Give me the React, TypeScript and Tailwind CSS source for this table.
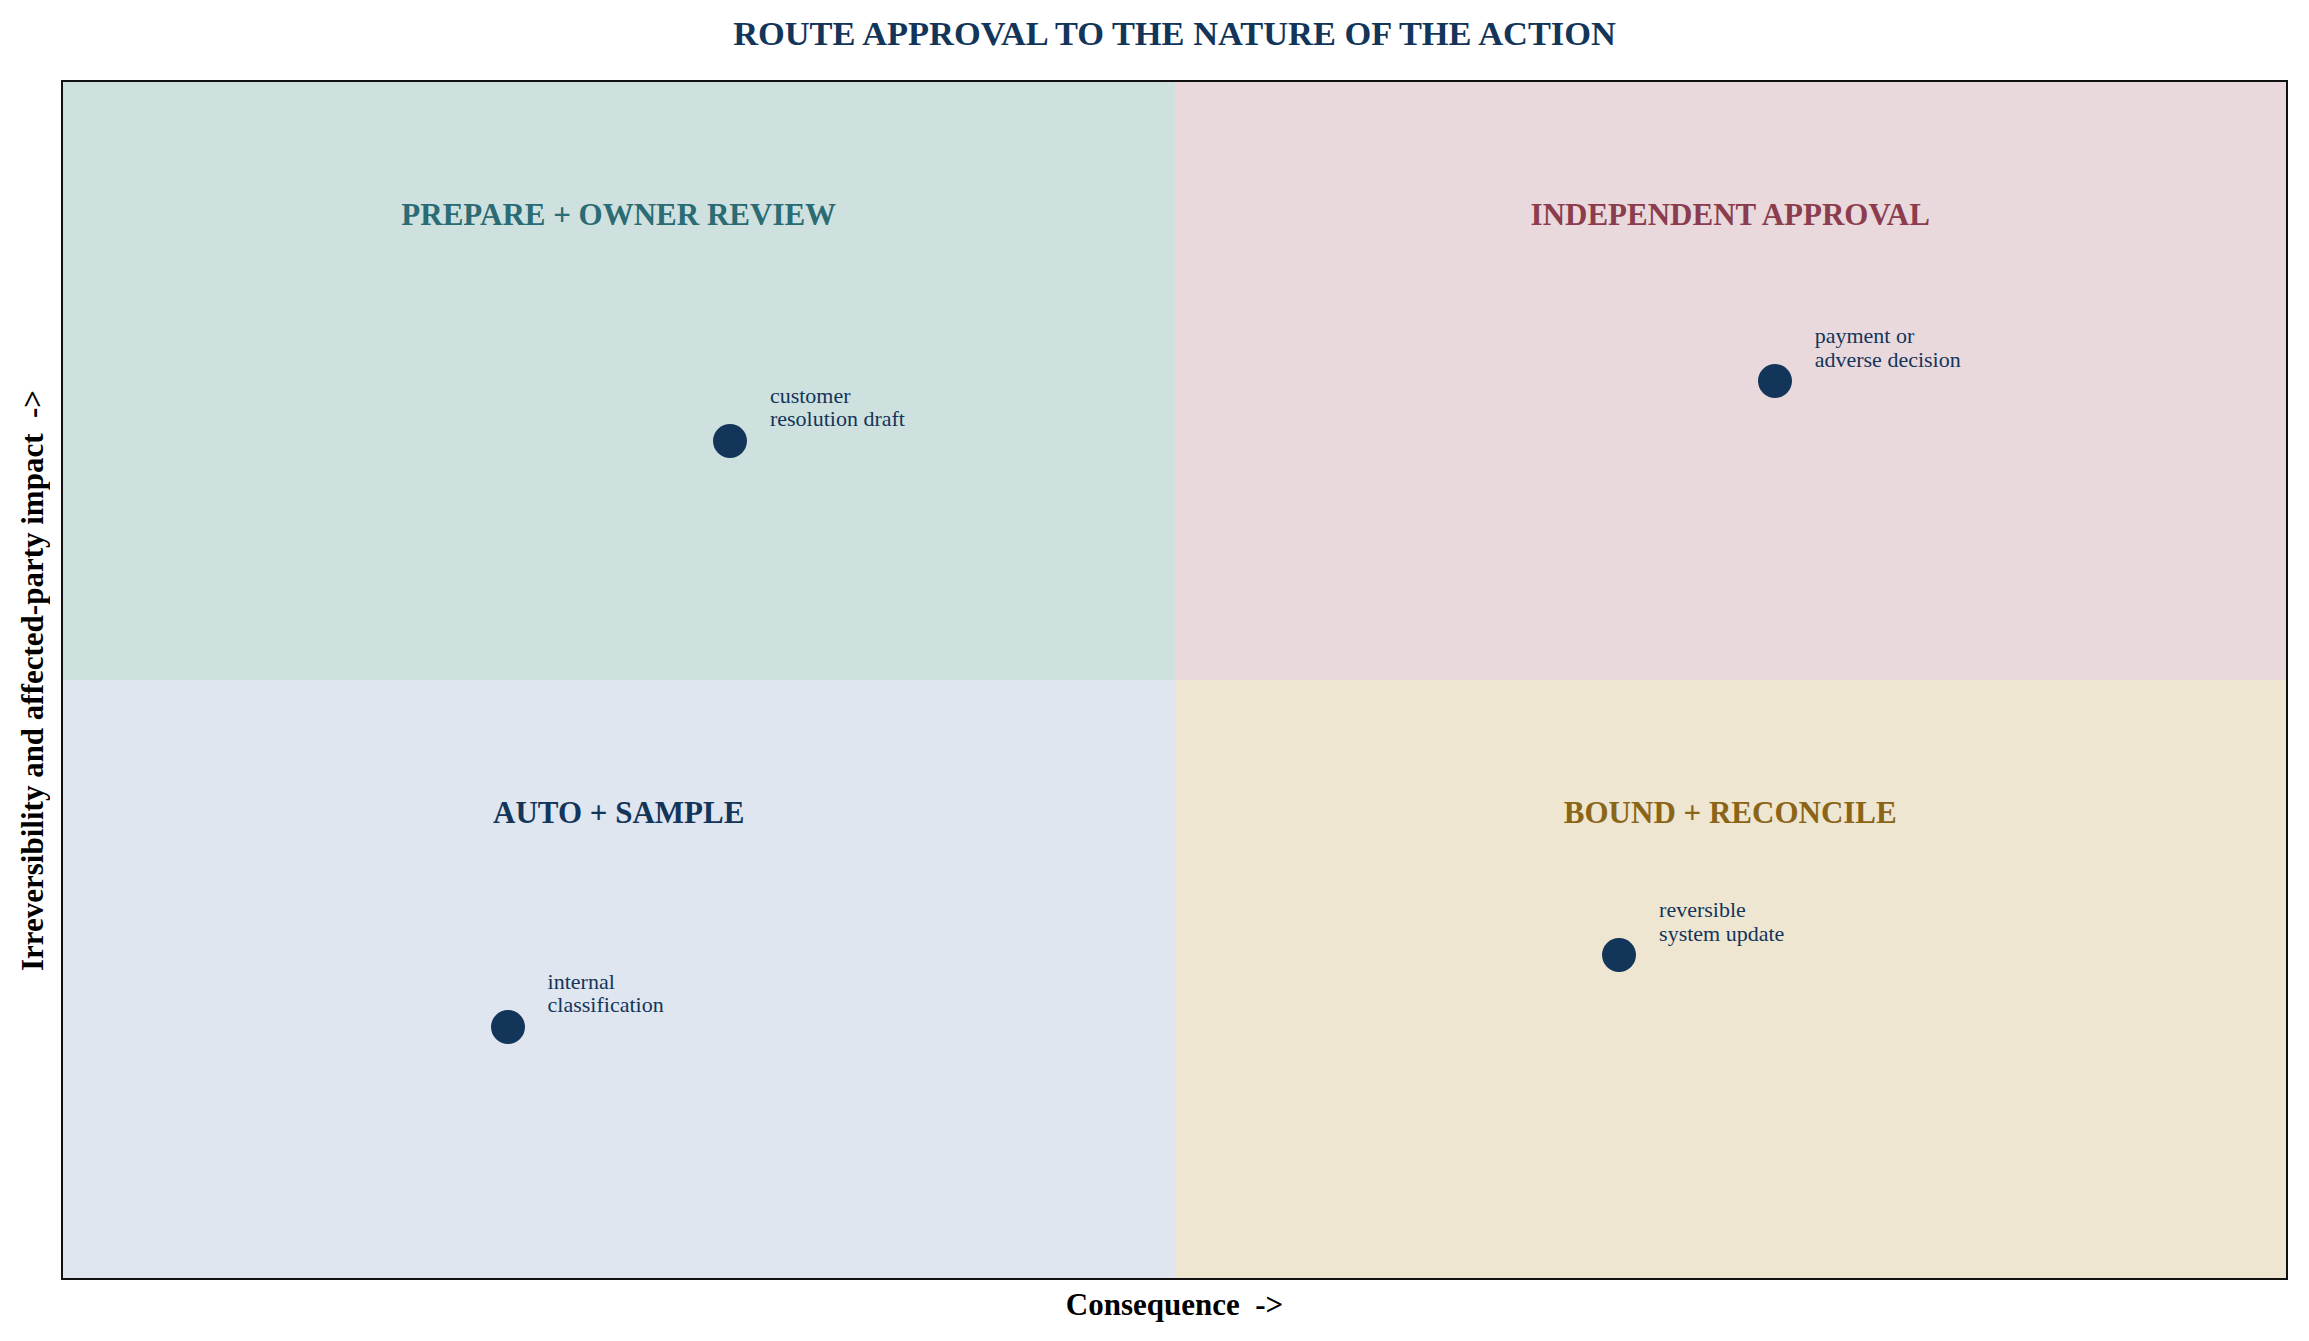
const NAVY = "#13355a";

type Quadrant = { label: string; bg: string; color: string };

const QUADRANTS: Quadrant[] = [
  { label: "PREPARE + OWNER REVIEW", bg: "bg-[#cfe1df]", color: "text-[#2a6b74]" },
  { label: "INDEPENDENT APPROVAL", bg: "bg-[#e9d9dd]", color: "text-[#8b3d4d]" },
  { label: "AUTO + SAMPLE", bg: "bg-[#dfe6f0]", color: "text-[#13355a]" },
  { label: "BOUND + RECONCILE", bg: "bg-[#efe6d2]", color: "text-[#8a6518]" },
];

// data coords on a 0..10 grid, like the original chart
const POINTS = [
  { x: 3.0, y: 7.0, lines: ["customer", "resolution draft"] },
  { x: 7.7, y: 7.5, lines: ["payment or", "adverse decision"] },
  { x: 7.0, y: 2.7, lines: ["reversible", "system update"] },
  { x: 2.0, y: 2.1, lines: ["internal", "classification"] },
];

const PLOT_W = 2223;
const PLOT_H = 1196;

function Point({ x, y, lines }: { x: number; y: number; lines: string[] }) {
  const cx = (x / 10) * PLOT_W;
  const cy = (1 - y / 10) * PLOT_H;
  return (
    <div
      className="absolute flex items-start gap-[23px]"
      style={{ left: cx - 17, top: cy - 57 }}
    >
      <div className="mt-[40px] h-[34px] w-[34px] shrink-0 rounded-full bg-[#13355a]" />
      <div className="whitespace-nowrap text-[22px] leading-[23.5px] text-[#13355a]">
        {lines.map((l) => (
          <div key={l}>{l}</div>
        ))}
      </div>
    </div>
  );
}

export default function App() {
  return (
    <div
      className="h-[1341px] w-[2309px] bg-white"
      style={{ fontFamily: '"Liberation Serif", "Times New Roman", serif', color: NAVY }}
    >
      <div className="ml-[61px] h-[80px] w-[2227px] pt-[16px] text-center text-[34.4px] font-bold leading-[34px] text-[#13355a]">
        ROUTE APPROVAL TO THE NATURE OF THE ACTION
      </div>

      <div className="flex">
        <div className="flex h-[1200px] w-[61px] shrink-0 items-center pl-[17px]">
          <span className="rotate-180 whitespace-pre text-[31px] font-bold leading-[31px] text-black [writing-mode:vertical-rl]">
            {"Irreversibility and affected-party impact  ->"}
          </span>
        </div>

        <div className="relative h-[1200px] w-[2227px] border-2 border-[#111]">
          <div className="grid h-full w-full grid-cols-2 grid-rows-2">
            {QUADRANTS.map((q) => (
              <div key={q.label} className={`${q.bg} pt-[118px] text-center`}>
                <span className={`${q.color} text-[31px] font-bold leading-[30px]`}>
                  {q.label}
                </span>
              </div>
            ))}
          </div>
          {POINTS.map((p) => (
            <Point key={p.lines[0]} {...p} />
          ))}
        </div>
      </div>

      <div className="ml-[61px] mt-[9px] w-[2227px] whitespace-pre text-center text-[31px] font-bold leading-[31px] text-black">
        {"Consequence  ->"}
      </div>
    </div>
  );
}
